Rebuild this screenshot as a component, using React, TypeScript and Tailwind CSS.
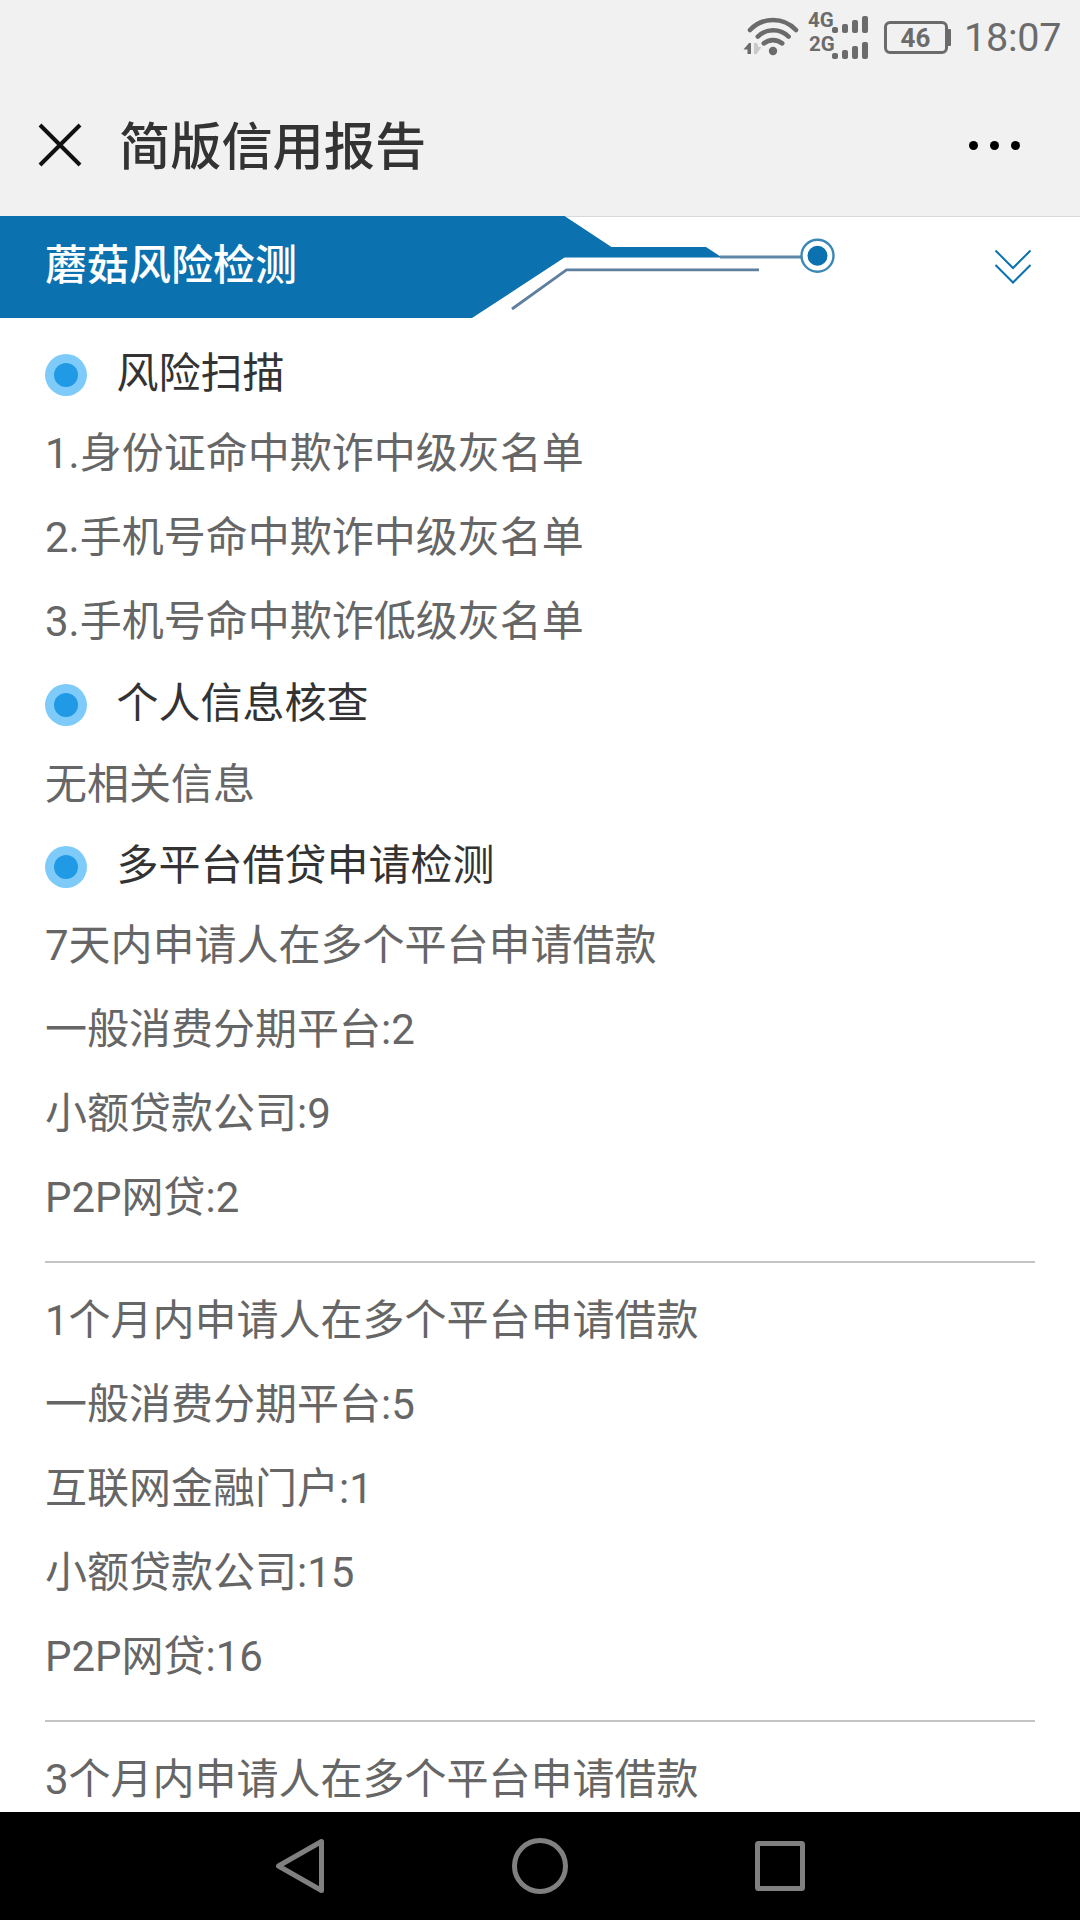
const scanResults = [
  "1.身份证命中欺诈中级灰名单",
  "2.手机号命中欺诈中级灰名单",
  "3.手机号命中欺诈低级灰名单",
];

const loanChecks = [
  [
    "7天内申请人在多个平台申请借款",
    "一般消费分期平台:2",
    "小额贷款公司:9",
    "P2P网贷:2",
  ],
  [
    "1个月内申请人在多个平台申请借款",
    "一般消费分期平台:5",
    "互联网金融门户:1",
    "小额贷款公司:15",
    "P2P网贷:16",
  ],
  ["3个月内申请人在多个平台申请借款"],
];

function WifiIcon() {
  return (
    <svg width="58" height="48" viewBox="742 12 58 48" fill="none">
      <g stroke="#6b6b6b" strokeWidth="4.6" strokeLinecap="round">
        <path d="M750 30A31.5 31.5 0 0 1 796 30" />
        <path d="M757.8 36.6A22 22 0 0 1 788.6 36.6" />
        <path d="M763.8 43.4A14.5 14.5 0 0 1 782.2 43.4" />
      </g>
      <circle cx="773" cy="51" r="4.2" fill="#6b6b6b" />
      <path d="M743.5 49.5L749 43H751V54H747.5V49.5Z" fill="#6b6b6b" />
      <path d="M754 43H757L758.5 47H761.5L756.5 54H754Z" fill="#c8c8c8" />
    </svg>
  );
}

function SignalBars() {
  return (
    <div className="flex h-[17px] items-end gap-1">
      <span className="h-1.5 w-1.5 rounded-[2px] bg-[#6b6b6b]" />
      <span className="h-[9px] w-1.5 rounded-[2px] bg-[#6b6b6b]" />
      <span className="h-[13px] w-1.5 rounded-[2px] bg-[#6b6b6b]" />
      <span className="h-[17px] w-1.5 rounded-[2px] bg-[#6b6b6b]" />
    </div>
  );
}

function StatusBar() {
  return (
    <div className="flex h-[75px] items-start justify-end pr-[18px] text-[#6b6b6b]">
      <div className="mt-3 shrink-0">
        <WifiIcon />
      </div>
      <div className="ml-2 mt-[9px] w-[60px] text-[20.5px] font-bold leading-[22px]">
        <div className="flex h-6 justify-between">
          <span className="w-6">4G</span>
          <div className="mt-[7px]">
            <SignalBars />
          </div>
        </div>
        <div className="flex h-6 justify-between">
          <span className="w-6 pl-px leading-[23px]">2G</span>
          <div className="mt-[9px]">
            <SignalBars />
          </div>
        </div>
      </div>
      <div className="ml-4 mt-[21px] flex items-center">
        <div className="flex h-[33px] w-16 items-center justify-center rounded-[6px] border-[3px] border-[#6b6b6b] pr-px pt-px text-[26px] font-bold">
          46
        </div>
        <div className="h-[17px] w-[3px] rounded-r-[1px] bg-[#6b6b6b]" />
      </div>
      <div className="ml-[13px] mt-[14px] w-[98px] whitespace-nowrap text-[39.5px] leading-[47px] tracking-[-0.2px]">
        18:07
      </div>
    </div>
  );
}

function TitleBar() {
  return (
    <div className="flex h-[142px] items-center border-b border-[#d9d9d9] pb-[1px] pl-[38px] pr-[60px]">
      <svg width="44" height="44" viewBox="0 0 44 44" stroke="#111" strokeWidth="4">
        <path d="M2 2L42 42M42 2L2 42" />
      </svg>
      <h1 className="ml-[37px] flex-1 pt-1.5 text-[51.2px] font-medium leading-none text-[#333]">
        简版信用报告
      </h1>
      <div className="flex gap-3">
        <span className="h-[9px] w-[9px] rounded-full bg-black" />
        <span className="h-[9px] w-[9px] rounded-full bg-black" />
        <span className="h-[9px] w-[9px] rounded-full bg-black" />
      </div>
    </div>
  );
}

function Banner() {
  return (
    <div className="relative -mt-px flex h-[102px] items-center justify-between pb-[2px] pl-[45px] pr-[48px]">
      <svg
        className="absolute left-0 top-0"
        width="840"
        height="102"
        viewBox="0 216 840 102"
        fill="none"
      >
        <path
          d="M0 216H564.5L611.5 247H706L722 257.5H564.5L472 318H0Z"
          fill="#0b71af"
        />
        <path d="M720 257H801" stroke="#5f87a8" strokeWidth="2.8" />
        <path d="M512 309L566.5 269.8H759" stroke="#5f7f9f" strokeWidth="2.8" />
        <circle cx="817.5" cy="255.7" r="16" stroke="#3b87b6" strokeWidth="2.4" />
        <circle cx="817.5" cy="255.7" r="10" fill="#0b71af" />
      </svg>
      <h2 className="relative text-[42px] font-medium leading-none text-white">
        蘑菇风险检测
      </h2>
      <svg
        className="mt-0.5"
        width="38"
        height="36"
        viewBox="0 0 38 36"
        fill="none"
        stroke="#0b71af"
        strokeWidth="2"
      >
        <path d="M1.5 1.5L19 19L36.5 1.5M1.5 16L19 33.5L36.5 16" />
      </svg>
    </div>
  );
}

function SectionTitle({ title }: { title: string }) {
  return (
    <div className="flex h-[78px] items-center text-[#333]">
      <span className="mt-1 flex h-[42px] w-[42px] items-center justify-center rounded-full bg-[#7ecbfa]">
        <span className="h-6 w-6 rounded-full bg-[#209ae5]" />
      </span>
      <h3 className="ml-[29.5px] pt-0.5 leading-[78px]">{title}</h3>
    </div>
  );
}

function NavBar() {
  return (
    <div className="flex h-[108px] shrink-0 items-center justify-center bg-black">
      <svg
        width="540"
        height="60"
        viewBox="270 1836 540 60"
        fill="none"
        stroke="#808080"
        strokeWidth="5"
        strokeLinejoin="round"
      >
        <path d="M278.5 1866L321.5 1841.5V1890.5Z" />
        <circle cx="540" cy="1866" r="25.5" />
        <rect x="757.5" y="1843.5" width="45" height="45" rx="1" />
      </svg>
    </div>
  );
}

function App() {
  return (
    <div className="flex h-[1920px] w-[1080px] flex-col overflow-hidden bg-white font-['Roboto','Noto_Sans_CJK_SC',sans-serif]">
      <header className="bg-[#f1f1f1]">
        <StatusBar />
        <TitleBar />
      </header>
      <Banner />
      <main className="min-h-0 flex-1 overflow-hidden px-[45px] pt-4 text-[42px] leading-[84px] text-[#666]">
        <SectionTitle title="风险扫描" />
        {scanResults.map((item) => (
          <p key={item}>{item}</p>
        ))}
        <SectionTitle title="个人信息核查" />
        <p className="h-[84px] pt-px">无相关信息</p>
        <SectionTitle title="多平台借贷申请检测" />
        {loanChecks.map((group, i) => (
          <div key={group[0]}>
            {i > 0 && <hr className="mb-4 mt-[21px] border-t-2 border-[#c4c4c4]" />}
            {group.map((line) => (
              <p key={line}>{line}</p>
            ))}
          </div>
        ))}
      </main>
      <NavBar />
    </div>
  );
}
export default App;
